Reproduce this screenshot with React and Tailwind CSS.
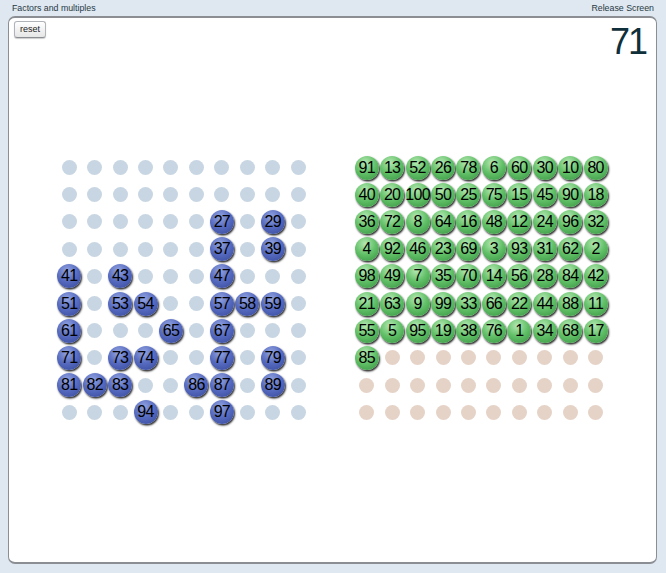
const blue = [27, 29, 37, 39, 41, 43, 47, 51, 53, 54, 57, 58, 59, 61, 65, 67, 71, 73, 74, 77, 79, 81, 82, 83, 86, 87, 89, 94, 97];

const green = [
  91, 13, 52, 26, 78, 6, 60, 30, 10, 80,
  40, 20, 100, 50, 25, 75, 15, 45, 90, 18,
  36, 72, 8, 64, 16, 48, 12, 24, 96, 32,
  4, 92, 46, 23, 69, 3, 93, 31, 62, 2,
  98, 49, 7, 35, 70, 14, 56, 28, 84, 42,
  21, 63, 9, 99, 33, 66, 22, 44, 88, 11,
  55, 5, 95, 19, 38, 76, 1, 34, 68, 17,
  85,
];

const ballBase = 'w-[24px] h-[24px] rounded-full flex items-center justify-center text-[16px] tracking-[-0.7px] text-black shadow-[1px_1.5px_2px_rgba(0,0,0,0.85)]';

function Cell({ children }) {
  return <div className="flex items-center justify-center">{children}</div>;
}

function Grid({ children }) {
  return <div className="grid grid-cols-[repeat(10,25.44px)] auto-rows-[27.2px]">{children}</div>;
}

export default function App() {
  const left = Array.from({ length: 100 }, (_, i) => i + 1);
  const right = Array.from({ length: 100 }, (_, i) => green[i]);

  return (
    <div className="w-[666px] h-[573px] bg-[#dfe7f0] font-['Liberation_Sans',Arial,sans-serif] text-[#1f3a44] overflow-hidden">
      <div className="flex justify-between h-4 pl-3 pr-3 pt-[1px] text-[8.8px] leading-[14px]">
        <span>Factors and multiples</span>
        <span>Release Screen</span>
      </div>
      <div className="ml-2 w-[649px] h-[548px] bg-white rounded-[7px] border border-[#8b8f94] border-t-2 border-b-2 pl-[47.5px]">
        <div className="flex justify-between h-[136px] -ml-[42.5px] pt-[3px] pr-[10px]">
          <button className="h-[17px] w-[32px] rounded-[3px] border border-[#b0b4b8] border-b-[#8a8e92] bg-gradient-to-b from-white to-[#e6e6e6] text-[9px] leading-none text-[#222] shadow-[0_1px_1px_rgba(0,0,0,0.2)]">
            reset
          </button>
          <div className="text-[36px] leading-[42px] tracking-[-2px] text-[#0f2f3a]">71</div>
        </div>
        <div className="flex gap-[43.1px]">
          <Grid>
            {left.map(n => (
              <Cell key={n}>
                {blue.includes(n) ? (
                  <div className={`${ballBase} bg-[radial-gradient(circle_at_42%_28%,#93a4e0_0%,#566abf_48%,#34479a_100%)]`}>{n}</div>
                ) : (
                  <div className="w-[15px] h-[15px] rounded-full bg-[#c8d6e3]" />
                )}
              </Cell>
            ))}
          </Grid>
          <Grid>
            {right.map((n, i) => (
              <Cell key={i}>
                {n ? (
                  <div className={`${ballBase} bg-[radial-gradient(circle_at_42%_28%,#b4e8b2_0%,#62c068_48%,#35923f_100%)]`}>{n}</div>
                ) : (
                  <div className="w-[15px] h-[15px] rounded-full bg-[#e6d3c7]" />
                )}
              </Cell>
            ))}
          </Grid>
        </div>
      </div>
    </div>
  );
}
